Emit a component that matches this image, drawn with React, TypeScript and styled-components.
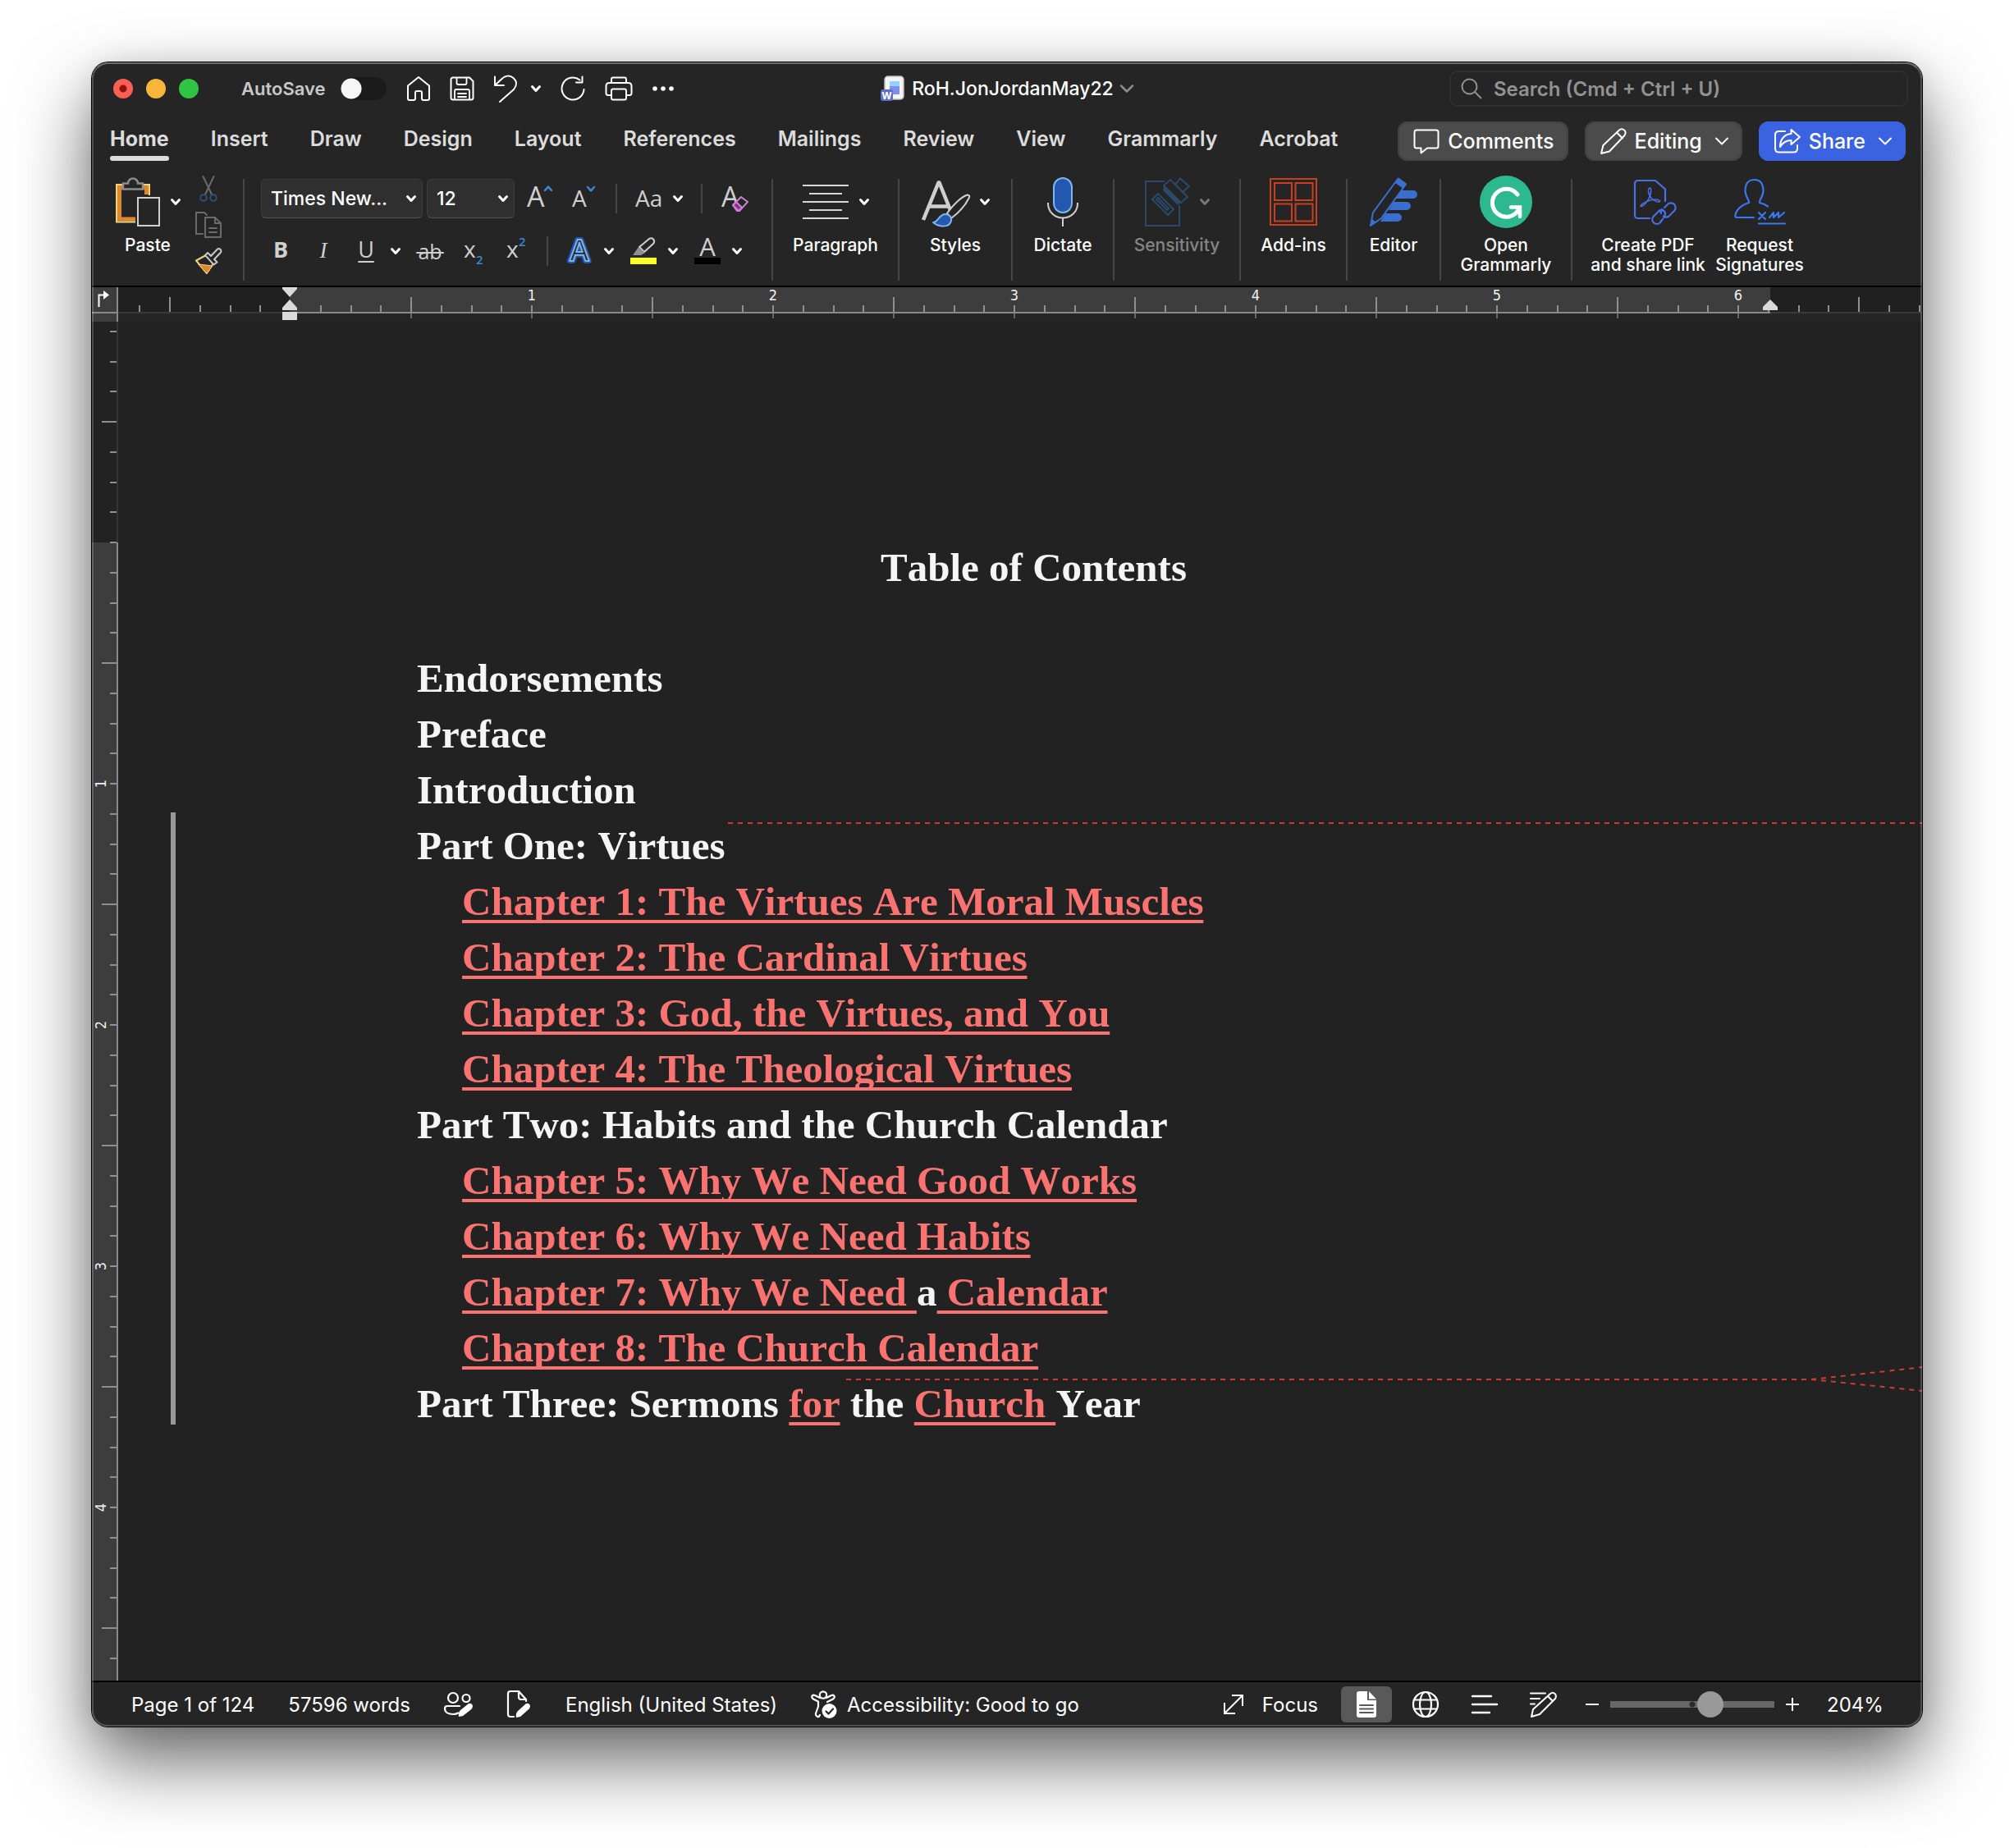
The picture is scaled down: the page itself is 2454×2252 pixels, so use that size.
import React from "react";
import styled, { createGlobalStyle, css } from "styled-components";

const ui = `Inter, "Liberation Sans", sans-serif`;
const serif = `"Liberation Serif", "Times New Roman", serif`;

const Global = createGlobalStyle`
  * { box-sizing: border-box; }
  body { margin: 0; background: #fff; font-family: ${ui}; color: #fff; }
  button, input, select { font: inherit; color: inherit; }
  button { background: none; border: 0; padding: 0; }
  svg { display: block; flex: none; overflow: visible; }
`;

const Desktop = styled.div`
  min-height: 100vh;
  padding: 76px 112px 148px;
  display: flex;
`;

const Window = styled.div`
  position: relative;
  flex: 1;
  min-width: 0;
  display: flex;
  flex-direction: column;
  border-radius: 20px;
  background: #252525;
  overflow: hidden;
`;

const Frame = styled.div`
  flex: 1;
  min-width: 0;
  display: flex;
  border-radius: 20px;
  box-shadow: 0 0 0 1px #000, 0 40px 90px rgba(0, 0, 0, 0.62), 0 0 32px rgba(0, 0, 0, 0.08);
`;

const Rim = styled.div`
  position: absolute;
  inset: 0;
  border-radius: 20px;
  border: 2px solid rgba(255, 255, 255, 0.2);
  border-top-color: rgba(255, 255, 255, 0.32);
  pointer-events: none;
`;

/* ---------- title bar ---------- */

const TitleBar = styled.header`
  height: 64px;
  padding: 0 17px;
  display: grid;
  grid-template-columns: 1fr auto 1fr;
  align-items: center;
`;

const TitleLeft = styled.div`
  display: flex;
  align-items: center;
  padding-left: 9px;
`;

const Lights = styled.div`
  display: flex;
  gap: 16px;
  margin-right: 52px;
`;

const Light = styled.button<{ $c: string; $dot?: boolean }>`
  width: 24px;
  height: 24px;
  border-radius: 50%;
  background: ${(p) => (p.$dot ? `radial-gradient(circle, #8c1310 0 4px, ${p.$c} 5px)` : p.$c)};
`;

const AutoSave = styled.label`
  display: flex;
  align-items: center;
  gap: 18px;
  font-size: 22px;
  font-weight: 600;
  color: #c8c8c8;
`;

const Switch = styled.input`
  appearance: none;
  margin: 0;
  width: 56px;
  height: 28px;
  border-radius: 14px;
  background: radial-gradient(circle at 13px 14px, #f6f6f6 0 12px, transparent 13px), #1b1b1b;
`;

const QuickBar = styled.div`
  display: flex;
  align-items: center;
  gap: 23px;
  margin-left: 24px;
`;

const IconPair = styled.span<{ $gap?: number }>`
  display: flex;
  align-items: center;
  gap: ${(p) => p.$gap ?? 14}px;
`;

const DocTitle = styled.button`
  display: flex;
  align-items: center;
  gap: 8px;
  font-size: 23px;
  font-weight: 500;
`;

const Search = styled.label`
  justify-self: end;
  width: 559px;
  height: 44px;
  padding: 0 12px;
  border: 2px solid #303030;
  border-radius: 10px;
  display: flex;
  align-items: center;
  gap: 14px;
`;

const SearchInput = styled.input`
  flex: 1;
  min-width: 0;
  border: 0;
  padding: 0;
  background: none;
  font-size: 24px;
  font-weight: 600;
  &::placeholder { color: #929292; opacity: 1; }
`;

/* ---------- tab row ---------- */

const TabRow = styled.div`
  height: 64px;
  padding: 8px 20px 8px 22px;
  display: flex;
  justify-content: space-between;
`;

const Tabs = styled.nav`
  display: flex;
  gap: 51px;
`;

const Tab = styled.button<{ $on?: boolean }>`
  height: 48px;
  line-height: 42px;
  font-size: 25px;
  font-weight: ${(p) => (p.$on ? 700 : 600)};
  color: #dcdcdc;
  display: flex;
  flex-direction: column;
  ${(p) =>
    p.$on &&
    css`
      &::after {
        content: "";
        width: 100%;
        height: 6px;
        border-radius: 3px;
        background: #dcdcdc;
      }
    `}
`;

const Actions = styled.div`
  display: flex;
  gap: 20px;
`;

const Action = styled.button<{ $primary?: boolean }>`
  height: 48px;
  padding: 0 17px 0 19px;
  border-radius: 12px;
  display: flex;
  align-items: center;
  gap: 10px;
  font-size: 25px;
  font-weight: 500;
  background: ${(p) => (p.$primary ? "#3b62e0" : "#4b4b4b")};
  box-shadow: inset 0 0 0 2px ${(p) => (p.$primary ? "#3b62e0" : "#434343")};
  & > span + svg { margin-left: 6px; }
`;

/* ---------- ribbon ---------- */

const Ribbon = styled.div`
  height: 146px;
  padding: 10px 0 0 10px;
  border-bottom: 2px solid #000;
  display: flex;
  align-items: flex-start;
`;

const Rule = styled.i<{ $tall?: boolean; $inset?: boolean }>`
  flex: none;
  width: 2px;
  height: ${(p) => (p.$tall ? 124 : 36)}px;
  margin: ${(p) => (p.$tall ? "4px 0 0" : p.$inset ? "0 2px" : "0")};
  background: #464646;
`;

const BigButton = styled.button<{ $w: number; $dim?: boolean }>`
  width: ${(p) => p.$w}px;
  display: flex;
  flex-direction: column;
  align-items: center;
  gap: 9px;
  font-size: 21px;
  font-weight: 500;
  line-height: 24px;
  white-space: pre;
  color: ${(p) => (p.$dim ? "#858585" : "#fff")};
`;

const IconBox = styled.span`
  height: 64px;
  display: flex;
  align-items: center;
  justify-content: center;
  gap: 13px;
`;

const ClipTools = styled.div`
  display: flex;
  flex-direction: column;
  gap: 12px;
  margin: 0 26px 0 0;
`;

const FontTools = styled.div`
  width: 642px;
  padding: 4px 0 0 20px;
  display: flex;
  flex-direction: column;
  gap: 20px;
`;

const FontRow = styled.div<{ $gap: number; $pad?: number }>`
  height: ${(p) => (p.$pad ? 40 : 48)}px;
  padding-left: ${(p) => p.$pad ?? 0}px;
  display: flex;
  align-items: center;
  gap: ${(p) => p.$gap}px;
`;

const Combos = styled.div`
  display: flex;
  gap: 5px;
  margin-right: -7px;
`;

const Combo = styled.label<{ $w: number }>`
  width: ${(p) => p.$w}px;
  height: 48px;
  display: grid;
  align-items: center;
  & > * { grid-area: 1 / 1; }
  & > svg { justify-self: end; margin-right: 8px; pointer-events: none; }
`;

const Select = styled.select`
  appearance: none;
  width: 100%;
  height: 48px;
  padding: 0 30px 0 11px;
  border: 1px solid #3d3d3d;
  border-bottom-color: #555;
  border-radius: 6px;
  background: #2f2f2f;
  font-size: 23px;
  font-weight: 500;
`;

/* ---------- document ---------- */

const RulerRow = styled.div`
  height: 42px;
  display: flex;
`;

const Corner = styled.button`
  width: 32px;
  height: 42px;
  background: #3d3d3d;
  border-right: 2px solid #8a8a8a;
`;

const HRuler = styled.div`
  flex: 1;
  min-width: 0;
  overflow-x: clip;
  background: #252525;
`;

const Body = styled.div`
  flex: 1;
  min-height: 0;
  display: flex;
`;

const VRuler = styled.div`
  width: 32px;
  contain: size;
  overflow-y: clip;
  background: #222;
`;

const Canvas = styled.main`
  position: relative;
  flex: 1;
  min-width: 0;
  overflow: hidden;
  padding: 266px 331px 40px 364px;
  background: #222;
  color: #f5f5f5;
  font-family: ${serif};
  font-size: 49px;
  font-weight: 700;
  font-kerning: none;
  line-height: 68px;
`;

const Heading = styled.h1`
  margin: 0 0 67px;
  font: inherit;
  font-kerning: none;
  text-align: center;
`;

const List = styled.ul`
  list-style: none;
  margin: 0;
  padding: 0;
  & & { padding-left: 55px; }
  white-space: nowrap;
`;

const Inserted = styled.ins`
  display: inline-block;
  white-space: pre;
  color: #fa7371;
  text-decoration: underline 4px;
  text-underline-offset: 6px;
  text-decoration-skip-ink: none;
  clip-path: inset(0 0 8px 0);
`;

const ChangeBar = styled.div`
  position: absolute;
  left: 64px;
  top: 598px;
  width: 6px;
  height: 746px;
  background: #999;
`;

const Leader = styled.svg<{ $top: number; $left: number }>`
  position: absolute;
  top: ${(p) => p.$top}px;
  left: ${(p) => p.$left}px;
`;

/* ---------- status bar ---------- */

const StatusBar = styled.footer`
  height: 56px;
  border-top: 2px solid #000;
  padding: 0 48px;
  display: flex;
  align-items: center;
  justify-content: space-between;
  font-size: 24px;
`;

const StatusSide = styled.div<{ $gap: number }>`
  display: flex;
  align-items: center;
  gap: ${(p) => p.$gap}px;
`;

const StatusItem = styled.button<{ $gap?: number }>`
  display: flex;
  align-items: center;
  gap: ${(p) => p.$gap ?? 12}px;
`;

const ViewButton = styled.button<{ $on?: boolean }>`
  width: 62px;
  height: 44px;
  border-radius: 6px;
  display: grid;
  place-items: center;
  background: ${(p) => (p.$on ? "#595959" : "none")};
`;

const Views = styled.div`
  display: flex;
  gap: 10px;
  padding-left: 8px;
`;

const Zoom = styled.div`
  display: flex;
  align-items: center;
  gap: 14px;
`;

const Percent = styled.button`
  width: 68px;
  margin-left: 20px;
  text-align: left;
`;

const Slider = styled.input`
  appearance: none;
  margin: 0;
  width: 200px;
  height: 32px;
  background: radial-gradient(circle at 100px 16px, #2b2b2b 0 3px, transparent 4px),
    linear-gradient(#676767, #676767) center / 100% 8px no-repeat;
  border-radius: 4px;
  &::-webkit-slider-thumb {
    appearance: none;
    width: 32px;
    height: 32px;
    border-radius: 50%;
    background: #999;
  }
`;

/* ---------- drawings ---------- */

type P = React.SVGProps<SVGSVGElement> & { w: number; h: number };
const Svg = ({ w, h, children, ...r }: P) => (
  <svg width={w} height={h} viewBox={`0 0 ${w} ${h}`} fill="none" stroke="#fff" strokeWidth={2} strokeLinecap="round" strokeLinejoin="round" aria-hidden {...r}>
    {children}
  </svg>
);

const Chevron = ({ dim }: { dim?: boolean }) => (
  <Svg w={12} h={10} strokeWidth={3} stroke={dim ? "#777" : "#fff"}>
    <path d="M1.5 2.5 6 7.5l4.500-5" />
  </Svg>
);

const ThinChevron = ({ dim }: { dim?: boolean }) => (
  <Svg w={16} h={10} strokeWidth={dim ? 2.5 : 2} stroke={dim ? "#8c8c8c" : "#fff"}>
    <path d="M1 1.500l7 7 7-7" />
  </Svg>
);

const HomeIcon = () => (
  <Svg w={30} h={30}>
    <path d="M2 11.500 15 1l13 10.500V27q0 2-2 2h-5q-2 0-2-2v-7q0-2-2-2h-4q-2 0-2 2v7q0 2-2 2H4q-2 0-2-2z" />
  </Svg>
);
const SaveIcon = () => (
  <Svg w={30} h={30}>
    <path d="M4 1.500h20l4.500 4.500v20q0 2.500-2.500 2.500H4q-2.500 0-2.500-2.500V4q0-2.500 2.500-2.500z" />
    <path d="M8.500 2v6q0 2 2 2h8q2 0 2-2V2M6 28V18q0-2 2-2h14q2 0 2 2v10M10 21h10M10 25h10" strokeWidth={1.8} />
  </Svg>
);
const UndoIcon = () => (
  <Svg w={30} h={34}>
    <path d="M2 2.500v10.500h11M2.500 12.500 9.500 6C14 1 20 0 24.500 4s4.500 9 .5 14L8 33" />
  </Svg>
);
const RedoIcon = () => (
  <Svg w={32} h={32}>
    <path d="M24.500 5.500A13.500 13.500 0 1 0 29.500 17M27.500 1.500V8.500H20" />
  </Svg>
);
const PrintIcon = () => (
  <Svg w={34} h={30}>
    <path d="M8 8V3.500q0-2 2-2h14q2 0 2 2V8M8 23H4q-2.500 0-2.500-2.500V12q0-4 4-4h23q4 0 4 4v8.500q0 2.500-2.500 2.500h-4" />
    <rect x="8" y="15.500" width="18" height="13" rx="2" />
  </Svg>
);
const DotsIcon = () => (
  <Svg w={28} h={6} stroke="none" fill="#fff">
    <circle cx="4" cy="3" r="2.800" />
    <circle cx="14" cy="3" r="2.800" />
    <circle cx="24" cy="3" r="2.800" />
  </Svg>
);
const WordDocIcon = () => (
  <Svg w={30} h={32} stroke="none">
    <rect x="5" y="1" width="23" height="28" rx="4" fill="#f4f4f6" stroke="#bfbfc4" strokeWidth={1.5} />
    <rect x="11" y="7" width="12" height="16" rx="1" fill="#7f8cf0" />
    <path d="M11 7h12v6H11z" fill="#8fd4fb" />
    <rect x="0" y="17" width="15" height="14" rx="3" fill="#5f6fc8" />
    <text x="7.500" y="28.500" fontSize="12" fontWeight="700" textAnchor="middle" fill="#fff" fontFamily={ui}>W</text>
  </Svg>
);
const SearchIcon = () => (
  <Svg w={26} h={26} stroke="#929292">
    <circle cx="10.500" cy="10.500" r="9" />
    <path d="m17 17 7.500 7.500" />
  </Svg>
);
const CommentIcon = () => (
  <Svg w={32} h={30}>
    <path d="M4 1.500h24q2.500 0 2.500 2.500v17q0 2.500-2.500 2.500H17l-7.500 6V23.500H4q-2.500 0-2.500-2.500V4Q1.500 1.500 4 1.500z" />
  </Svg>
);
const PencilIcon = () => (
  <Svg w={32} h={32}>
    <path d="M1 31l2.500-10L23 2.500q3-2.500 6 0t.5 6.500L11 28.500zM20 5.500l7 7" />
  </Svg>
);
const ShareIcon = () => (
  <Svg w={32} h={30}>
    <path d="M13 3H5.500Q1 3 1 7.500V24q0 4.500 4.500 4.500h18q4.500 0 4.500-4.500v-4" />
    <path d="M20.500 1 31 10l-10.500 9v-5C14 14 10 17 7 22c0-9 5-15.500 13.500-16z" />
  </Svg>
);

const PasteIcon = () => (
  <Svg w={54} h={60} strokeLinecap="butt" strokeLinejoin="miter">
    <path d="M9 12.500H4.500V51H24M33 12.500h4.500V21" stroke="#dc892c" strokeWidth={5} />
    <path d="M9 9H1v45.500h23M33 9h8v13" stroke="#f2d184" />
    <path d="M9 14.500V7.500h6a6 6 0 0 1 12 0h6v7z" stroke="#8c8c8c" strokeWidth={2.5} fill="#252525" />
    <rect x="27" y="25" width="26" height="34" stroke="#d0d0d0" fill="#252525" />
  </Svg>
);
const CutIcon = () => (
  <Svg w={32} h={32} stroke="#6a6a6a">
    <path d="M9.500 1 20 23M22.500 1 12 23" />
    <circle cx="10" cy="27" r="3.800" stroke="#2f4e74" />
    <circle cx="22" cy="27" r="3.800" stroke="#2f4e74" />
  </Svg>
);
const CopyIcon = () => (
  <Svg w={32} h={32} stroke="#6a6a6a" strokeLinejoin="miter">
    <path d="M9 27H1V1h10l3 3M12 7h12l7 7v17H12zM24 7v7h7M17 20h9M17 25h9" />
  </Svg>
);
const BrushIcon = () => (
  <Svg w={32} h={32}>
    <path d="M1 15.500 13 9l9 10-8 12z" fill="#252525" stroke="#f2d184" />
    <path d="M4 20l17 2-7 9z" fill="#dc892c" stroke="#f2d184" strokeWidth={1} />
    <path d="m12 9 3-3 4 4 8-8.500q2-1 3.500.5t.5 3.500L23 14l3.500 3.500-4 3z" fill="#252525" stroke="#c8c8c8" />
  </Svg>
);

const glyph = { fontFamily: `"Open Sans", sans-serif`, stroke: "none", fill: "#cfcfcf" };
const GrowIcon = () => (
  <Svg w={32} h={36}>
    <text x="0" y="28" fontSize="34" {...glyph}>A</text>
    <path d="M22 8l4-4.500L30 8" stroke="#3f87d6" strokeWidth={2.5} />
  </Svg>
);
const ShrinkIcon = () => (
  <Svg w={32} h={36}>
    <text x="1" y="28" fontSize="28" {...glyph}>A</text>
    <path d="M20 4l4 4.500L28 4" stroke="#3f87d6" strokeWidth={2.5} />
  </Svg>
);
const CaseIcon = () => (
  <Svg w={34} h={36}>
    <text x="0" y="28" fontSize="28" {...glyph}>Aa</text>
  </Svg>
);
const ClearIcon = () => (
  <Svg w={34} h={36}>
    <text x="1" y="28" fontSize="34" {...glyph}>A</text>
    <path d="M15 26 25 16l8 6-10 11h-3z" fill="#252525" stroke="#c983d0" />
    <path d="m15 26 4-4 7 7-4 4z" fill="#8b2f97" stroke="#c983d0" />
  </Svg>
);
const Letter = ({ ch, bold, italic, under }: { ch: string; bold?: boolean; italic?: boolean; under?: boolean }) => (
  <Svg w={32} h={36}>
    <text x="16" y="26" fontSize="27" textAnchor="middle" {...glyph} fontWeight={bold ? 700 : 400} fontStyle={italic ? "italic" : "normal"} fontFamily={italic ? serif : glyph.fontFamily}>
      {ch}
    </text>
    {under && <path d="M7 31h18" stroke="#cfcfcf" />}
  </Svg>
);
const StrikeIcon = () => (
  <Svg w={32} h={36}>
    <text x="16" y="28" fontSize="25" textAnchor="middle" {...glyph}>ab</text>
    <path d="M0 20h32" stroke="#cfcfcf" />
  </Svg>
);
const ScriptIcon = ({ up }: { up?: boolean }) => (
  <Svg w={32} h={36}>
    <text x="5" y="26" fontSize="28" {...glyph}>x</text>
    <text x="20" y={up ? 12 : 34} fontSize="15" {...glyph} fill="#3f87d6" fontWeight="600">2</text>
  </Svg>
);
const EffectsIcon = () => (
  <Svg w={32} h={36}>
    <text x="16" y="30" fontSize="36" textAnchor="middle" fontFamily={glyph.fontFamily} fontWeight="600" fill="#252525" stroke="#2458ae" strokeWidth={6}>A</text>
    <text x="16" y="30" fontSize="36" textAnchor="middle" fontFamily={glyph.fontFamily} fontWeight="600" fill="#252525" stroke="#7db5ee" strokeWidth={2}>A</text>
  </Svg>
);
const HighlightIcon = () => (
  <Svg w={32} h={36}>
    <path d="M0 26h32v8H0z" fill="#fbff2b" stroke="none" />
    <path d="M11 13 23 3q3-1.500 5 .5t.5 5L17 19z" stroke="#cfcfcf" />
    <path d="M10 13l8 7-5 3H3z" fill="#8f8f8f" stroke="none" />
  </Svg>
);
const ColorIcon = () => (
  <Svg w={32} h={36}>
    <path d="M0 26h32v8H0z" fill="#000" stroke="none" />
    <text x="16" y="24" fontSize="31" textAnchor="middle" {...glyph}>A</text>
  </Svg>
);

const ParagraphIcon = () => (
  <Svg w={56} h={42} stroke="#d6d6d6" strokeLinecap="butt">
    <path d="M0 1h56M8 11h40M0 21h56M8 31h40M0 41h56" />
  </Svg>
);
const StylesIcon = () => (
  <Svg w={58} h={60}>
    <path d="M2 52 20.500 6.500h1L35 40M9 35.500h24" stroke="#cfcfcf" strokeWidth={4.5} strokeLinecap="butt" />
    <path d="M31 44C38 34 48 24 55.500 21.500q4 0 2 4C53 35 44 44 36 50z" fill="#252525" stroke="#cfcfcf" />
    <path d="M14 55c6 0 7-10 15-10 5 0 8 4 7 8-2 9-15 8-22 2z" fill="#2458ae" stroke="#7db5ee" />
  </Svg>
);
const MicIcon = () => (
  <Svg w={38} h={60}>
    <rect x="8" y="1" width="22" height="42" rx="11" fill="#2458ae" stroke="#7db5ee" />
    <path d="M1 31v1.500a18 17 0 0 0 36 0V31M19 50v10" stroke="#cfcfcf" strokeLinecap="butt" />
  </Svg>
);
const SensitivityIcon = () => (
  <Svg w={54} h={60} stroke="#2b4a69" strokeLinejoin="miter" strokeLinecap="butt">
    <path d="M24 5H1v54h41V34" />
    <path d="m16 20 19 19-7 7L9 27zM16 25 29 38l-2 2-13-13z" />
    <path d="m31 3 21 21-8 7L23 10z" />
    <path d="m23 10 21 21-4 3-18-18z" fill="#2b4a69" stroke="none" />
    <path d="M37 9l6-7.500L54 11l-8 7" />
  </Svg>
);
const AddinsIcon = () => (
  <Svg w={58} h={58} stroke="#c8401f" strokeLinejoin="miter">
    <rect x="1" y="1" width="56" height="56" />
    <path d="M6 6h21v21H6zM31.500 6h21v21h-21zM6 31.500h21v21H6zM31.500 31.500h21v21h-21z" />
  </Svg>
);
const EditorIcon = () => (
  <Svg w={60} h={62} stroke="none" fill="#3a6ecf">
    <path d="M38 17h16a5 5 0 0 1 0 10H33zM30 31h16a5 5 0 0 1 0 10H24zM20 45h15a5 5 0 0 1 0 10H14z" />
    <path d="M5 44 35.500 2.500 45 9.500 15 51 2 60z" fill="#252525" stroke="#3a6ecf" />
    <path d="m36 1.500 10 7.500-4 6L32 8zM1 61l2.500-9 6 4z" />
  </Svg>
);
const GrammarlyIcon = () => (
  <Svg w={64} h={64}>
    <circle cx="32" cy="32" r="32" fill="#2eb890" stroke="none" />
    <path d="M46 23A17 17 0 1 0 47 42" strokeWidth={5} />
    <path d="M38 38.500h11V50" strokeWidth={4.5} strokeLinejoin="miter" />
  </Svg>
);
const PdfIcon = () => (
  <Svg w={66} h={58} stroke="#4a6fe8" strokeWidth={2.2}>
    <g transform="translate(16 2)">
      <path d="M19 47H5q-4 0-4-4V5q0-4 4-4h21l12 10.500V26" />
      <path d="M19 10c-4 2 0 15 10 17 5 0 2-3-3-3-7 0-17 5-18 8 2 2 10-6 12-14 1-5 1-8-1-8z" strokeWidth={1.6} />
      <path d="M37 34l4-4a5.500 5.500 0 0 1 8 8l-6 6a5.500 5.500 0 0 1-7 .5M33 41a5.500 5.500 0 0 1 1-5M35 48l-3.500 4.500a5.500 5.500 0 0 1-8-7.500l6-6a5.500 5.500 0 0 1 7-1q3 4 0 8" />
    </g>
  </Svg>
);
const SignIcon = () => (
  <Svg w={62} h={58} stroke="#3a78f5" strokeWidth={2.2}>
    <path d="M24 48H3q-2 0-1.500-3C3 37 9 33 18 30c1-3-4-6-4.500-14C13.500 6 18 2 24.500 2S35.500 6 35.500 16C35 24 30 27 31 30c4 1 8 3 10 4.500" />
    <path d="m30 42 8 8M38 42l-8 8M43 48l5-6v6l6-6v6l7-6M30 55.500h32" />
  </Svg>
);

const PeopleIcon = () => (
  <Svg w={36} h={32} strokeWidth={2.2}>
    <circle cx="11" cy="8" r="6" />
    <circle cx="27" cy="8.500" r="4.500" />
    <path d="M19 18H4q-3 0-3 3c0 5 5 7 10 7q4 0 6-1.500" />
    <path d="M18 31q-1-5 2-8l10-8q4-1 5 3 0 3-3 5l-9 7z" fill="#fff" stroke="none" />
  </Svg>
);
const DocPenIcon = () => (
  <Svg w={30} h={34} strokeWidth={2.2}>
    <path d="M8 32H4q-3 0-3-3V4q0-3 3-3h10l9 10v2M14 1v7q0 3 3 3h6" />
    <path d="M11 33q-1-5 2-8l10-9q4-1 5 3 0 3-3 5l-9 8z" fill="#fff" stroke="none" />
  </Svg>
);
const AccessIcon = () => (
  <Svg w={32} h={34} strokeWidth={2.2}>
    <circle cx="15" cy="5.500" r="4.200" />
    <path d="M11 9 5 6Q2 5 1.200 7.500 1 9 3 10.500l6 3v6L6 28q-.5 3 2 4 2 .5 3-2M19 9l6-3q3-1 3.800 1.500.2 1.500-1.800 3l-7 3.500" />
    <circle cx="22.500" cy="25" r="9" fill="#fff" stroke="none" />
    <path d="m18.500 25.500 3 3 5.500-6" stroke="#252525" />
  </Svg>
);
const FocusIcon = () => (
  <Svg w={26} h={26} strokeLinecap="butt" strokeLinejoin="miter">
    <path d="M11 2h13v13M24 2 2 24M2 11v13h13" />
  </Svg>
);
const PageIcon = () => (
  <Svg w={24} h={32} stroke="none" fill="#fff">
    <path d="M3 0h10v11h11v18q0 3-3 3H3q-3 0-3-3V3q0-3 3-3zM15 0l9 9.500h-9z" />
    <path d="M4 17h16M4 21.500h16M4 26h16" stroke="#595959" />
  </Svg>
);
const GlobeIcon = () => (
  <Svg w={32} h={32} strokeWidth={2.2}>
    <circle cx="16" cy="16" r="15" />
    <ellipse cx="16" cy="16" rx="7" ry="15" />
    <path d="M2.500 10.500h27M2.500 21.500h27" />
  </Svg>
);
const OutlineIcon = () => (
  <Svg w={32} h={24} strokeWidth={2.4}>
    <path d="M1 2h23M1 12h30M1 22h21" />
  </Svg>
);
const DraftIcon = () => (
  <Svg w={34} h={32}>
    <path d="M1 2.500h18M1 9h11M1 15.500h5M2 31l2-9L25 3q3-2.500 5.500 0t.5 6L12 28zM22 6l6 6" />
  </Svg>
);
const Sign = ({ plus }: { plus?: boolean }) => (
  <Svg w={16} h={16} strokeLinecap="butt">
    <path d={plus ? "M0 8h16M8 0v16" : "M0 8h16"} />
  </Svg>
);

/* ---------- rulers: 294px to the inch, eight divisions ---------- */

const INCH = 294;
const steps = (from: number, to: number) => Array.from({ length: to - from }, (_, i) => from + i);
const numeral = { fontSize: 18, fontFamily: `"DejaVu Sans Condensed", "DejaVu Sans", sans-serif`, fill: "#f0f0f0", textAnchor: "middle" as const };

const HorizontalRuler = () => {
  const zero = 209;
  const end = 2013;
  return (
    <svg width="100%" height="42" aria-hidden>
      <rect width="100%" height="30" fill="#202020" />
      <rect x={zero} width={end - zero} height="30" fill="#3d3d3d" />
      <rect width="100%" y="30" height="2" fill="#3a3a3a" />
      <rect x={zero} y="30" width={end - zero} height="2" fill="#8a8a8a" />
      {steps(-5, 60).filter((n) => n !== 0).map((n) => {
        const x = Math.round(zero + (n * INCH) / 8);
        const half = n % 4 === 0 && n % 8 !== 0;
        const inside = x > zero && x < end;
        return (
          <g key={n}>
            <rect x={x} y={half ? 12 : 22} width="2" height={half ? 18 : 8} fill="#8e8e93" />
            {n % 4 === 0 && inside && <rect x={x} y="32" width="2" height="6" fill="#66666a" />}
            {n % 8 === 0 && inside && <text x={x + 1} y="16" {...numeral}>{n / 8}</text>}
          </g>
        );
      })}
      <path d={`M${zero - 9} 0h18v2l-9 10-9-10zM${zero} 15l9 10v3h-18v-3zM${zero - 9} 30h18v10h-18z`} fill="#dadada" />
      <path d={`M${end} 15l9 9v4h-18v-4z`} fill="#dadada" />
    </svg>
  );
};

const VerticalRuler = () => {
  const zero = 269;
  return (
    <svg width="32" height="100%" aria-hidden>
      <rect y={zero} width="30" height="100%" fill="#3d3d3d" />
      <rect x="30" width="2" height={zero} fill="#353535" />
      <rect x="30" y={zero} width="2" height="100%" fill="#8a8a8a" />
      {steps(-7, 38).map((n) => {
        const y = Math.round(zero + (n * INCH) / 8) - 1;
        const half = n % 4 === 0 && n % 8 !== 0;
        return (
          <g key={n}>
            <rect x={half ? 12 : 22} y={y} width={half ? 18 : 8} height="2" fill="#8e8e93" />
            {n % 8 === 0 && n > 0 && (
              <text transform={`translate(17 ${y + 1}) rotate(-90)`} {...numeral}>{n / 8}</text>
            )}
          </g>
        );
      })}
    </svg>
  );
};

const Red = "#cf3a37";

export default function App() {
  return (
    <Desktop>
      <Global />
      <Frame>
        <Window>
          <TitleBar>
            <TitleLeft>
              <Lights>
                <Light $c="#fb5f55" $dot aria-label="Close" />
                <Light $c="#f8b73b" aria-label="Minimize" />
                <Light $c="#2fc442" aria-label="Zoom window" />
              </Lights>
              <AutoSave>
                AutoSave
                <Switch type="checkbox" role="switch" />
              </AutoSave>
              <QuickBar>
                <button aria-label="Home"><HomeIcon /></button>
                <button aria-label="Save"><SaveIcon /></button>
                <IconPair $gap={16}>
                  <button aria-label="Undo"><UndoIcon /></button>
                  <button aria-label="Undo options"><Chevron /></button>
                </IconPair>
                <button aria-label="Redo"><RedoIcon /></button>
                <button aria-label="Print"><PrintIcon /></button>
                <button aria-label="More"><DotsIcon /></button>
              </QuickBar>
            </TitleLeft>
            <DocTitle>
              <WordDocIcon />
              RoH.JonJordanMay22
              <ThinChevron dim />
            </DocTitle>
            <Search>
              <SearchIcon />
              <SearchInput type="text" aria-label="Search" placeholder="Search (Cmd + Ctrl + U)" />
            </Search>
          </TitleBar>

          <TabRow>
            <Tabs>
              {["Home", "Insert", "Draw", "Design", "Layout", "References", "Mailings", "Review", "View", "Grammarly", "Acrobat"].map((t, i) => (
                <Tab key={t} $on={i === 0}>{t}</Tab>
              ))}
            </Tabs>
            <Actions>
              <Action><CommentIcon /><span>Comments</span></Action>
              <Action><PencilIcon /><span>Editing</span><ThinChevron /></Action>
              <Action $primary><ShareIcon /><span>Share</span><ThinChevron /></Action>
            </Actions>
          </TabRow>

          <Ribbon>
            <BigButton $w={116}>
              <IconBox><PasteIcon /><Chevron /></IconBox>
              Paste
            </BigButton>
            <ClipTools>
              <button aria-label="Cut"><CutIcon /></button>
              <button aria-label="Copy"><CopyIcon /></button>
              <button aria-label="Format painter"><BrushIcon /></button>
            </ClipTools>
            <Rule $tall />
            <FontTools>
              <FontRow $gap={22}>
                <Combos>
                  <Combo $w={197}>
                    <Select aria-label="Font"><option>Times New...</option></Select>
                    <Chevron />
                  </Combo>
                  <Combo $w={107}>
                    <Select aria-label="Font size"><option>12</option></Select>
                    <Chevron />
                  </Combo>
                </Combos>
                <button aria-label="Grow font"><GrowIcon /></button>
                <button aria-label="Shrink font"><ShrinkIcon /></button>
                <Rule />
                <IconPair $gap={12}>
                  <button aria-label="Change case"><CaseIcon /></button>
                  <Chevron />
                </IconPair>
                <Rule />
                <button aria-label="Clear formatting"><ClearIcon /></button>
              </FontRow>
              <FontRow $gap={20} $pad={8}>
                <button aria-label="Bold"><Letter ch="B" bold /></button>
                <button aria-label="Italic"><Letter ch="I" italic /></button>
                <IconPair><button aria-label="Underline"><Letter ch="U" under /></button><Chevron /></IconPair>
                <button aria-label="Strikethrough"><StrikeIcon /></button>
                <button aria-label="Subscript"><ScriptIcon /></button>
                <button aria-label="Superscript"><ScriptIcon up /></button>
                <Rule $inset />
                <IconPair><button aria-label="Text effects"><EffectsIcon /></button><Chevron /></IconPair>
                <IconPair><button aria-label="Highlight"><HighlightIcon /></button><Chevron /></IconPair>
                <IconPair><button aria-label="Font color"><ColorIcon /></button><Chevron /></IconPair>
              </FontRow>
            </FontTools>
            <Rule $tall />
            <BigButton $w={152}><IconBox><ParagraphIcon /><Chevron /></IconBox>Paragraph</BigButton>
            <Rule $tall />
            <BigButton $w={136}><IconBox><StylesIcon /><Chevron /></IconBox>Styles</BigButton>
            <Rule $tall />
            <BigButton $w={122}><IconBox><MicIcon /></IconBox>Dictate</BigButton>
            <Rule $tall />
            <BigButton $w={152} $dim><IconBox><SensitivityIcon /><Chevron dim /></IconBox>Sensitivity</BigButton>
            <Rule $tall />
            <BigButton $w={128}><IconBox><AddinsIcon /></IconBox>Add-ins</BigButton>
            <Rule $tall />
            <BigButton $w={112}><IconBox><EditorIcon /></IconBox>Editor</BigButton>
            <Rule $tall />
            <BigButton $w={158}><IconBox><GrammarlyIcon /></IconBox>{"Open\nGrammarly"}</BigButton>
            <Rule $tall />
            <BigButton $w={184}><IconBox><PdfIcon /></IconBox>{"Create PDF\nand share link"}</BigButton>
            <BigButton $w={88}><IconBox><SignIcon /></IconBox>{"Request\nSignatures"}</BigButton>
          </Ribbon>

          <RulerRow>
            <Corner aria-label="Tab stop">
              <svg width="30" height="42" aria-hidden>
                <path d="M0 31h30" stroke="#8a8a8a" strokeWidth="2" />
                <path d="M8.500 24V9.500H16" stroke="#fff" strokeWidth="2" fill="none" />
                <path d="M14 4l7 5.500-7 5.500z" fill="#fff" />
              </svg>
            </Corner>
            <HRuler><HorizontalRuler /></HRuler>
          </RulerRow>

          <Body>
            <VRuler><VerticalRuler /></VRuler>
            <Canvas>
              <ChangeBar />
              <Heading>Table of Contents</Heading>
              <List>
                <li>Endorsements</li>
                <li>Preface</li>
                <li>Introduction</li>
                <li>
                  Part One: Virtues
                  <List>
                    <li><Inserted>Chapter 1: The Virtues Are Moral Muscles</Inserted></li>
                    <li><Inserted>Chapter 2: The Cardinal Virtues</Inserted></li>
                    <li><Inserted>Chapter 3: God, the Virtues, and You</Inserted></li>
                    <li><Inserted>Chapter 4: The Theological Virtues</Inserted></li>
                  </List>
                </li>
                <li>
                  Part Two: Habits and the Church Calendar
                  <List>
                    <li><Inserted>Chapter 5: Why We Need Good Works</Inserted></li>
                    <li><Inserted>Chapter 6: Why We Need Habits</Inserted></li>
                    <li><Inserted>Chapter 7: Why We Need </Inserted>a<Inserted> Calendar</Inserted></li>
                    <li><Inserted>Chapter 8: The Church Calendar</Inserted></li>
                  </List>
                </li>
                <li>Part Three: Sermons <Inserted>for</Inserted> the <Inserted>Church </Inserted>Year</li>
              </List>
              <Leader $top={610} $left={743} width="1500" height="2" aria-hidden>
                <path d="M0 1h1500" stroke={Red} strokeWidth="2" strokeDasharray="6 6" />
              </Leader>
              <Leader $top={1272} $left={887} width="1320" height="34" fill="none" aria-hidden>
                <path d="M0 17h1176" stroke={Red} strokeWidth="2" strokeDasharray="6 6" />
                <path d="M1176 17l136-15M1176 17l136 14" stroke={Red} strokeWidth="2" strokeDasharray="6 6" />
              </Leader>
            </Canvas>
          </Body>

          <StatusBar>
            <StatusSide $gap={41}>
              <StatusItem>Page 1 of 124</StatusItem>
              <StatusItem>57596 words</StatusItem>
              <StatusItem aria-label="Co-authoring"><PeopleIcon /></StatusItem>
              <StatusItem aria-label="Track changes"><DocPenIcon /></StatusItem>
              <StatusItem>English (United States)</StatusItem>
              <StatusItem><AccessIcon />Accessibility: Good to go</StatusItem>
            </StatusSide>
            <StatusSide $gap={20}>
              <StatusItem $gap={22}><FocusIcon />Focus</StatusItem>
              <Views>
                <ViewButton $on aria-label="Print layout"><PageIcon /></ViewButton>
                <ViewButton aria-label="Web layout"><GlobeIcon /></ViewButton>
                <ViewButton aria-label="Outline"><OutlineIcon /></ViewButton>
                <ViewButton aria-label="Draft"><DraftIcon /></ViewButton>
              </Views>
              <Zoom>
                <button aria-label="Zoom out"><Sign /></button>
                <Slider type="range" aria-label="Zoom" min={0} max={100} defaultValue={63} />
                <button aria-label="Zoom in"><Sign plus /></button>
                <Percent>204%</Percent>
              </Zoom>
            </StatusSide>
          </StatusBar>
          <Rim />
        </Window>
      </Frame>
    </Desktop>
  );
}
